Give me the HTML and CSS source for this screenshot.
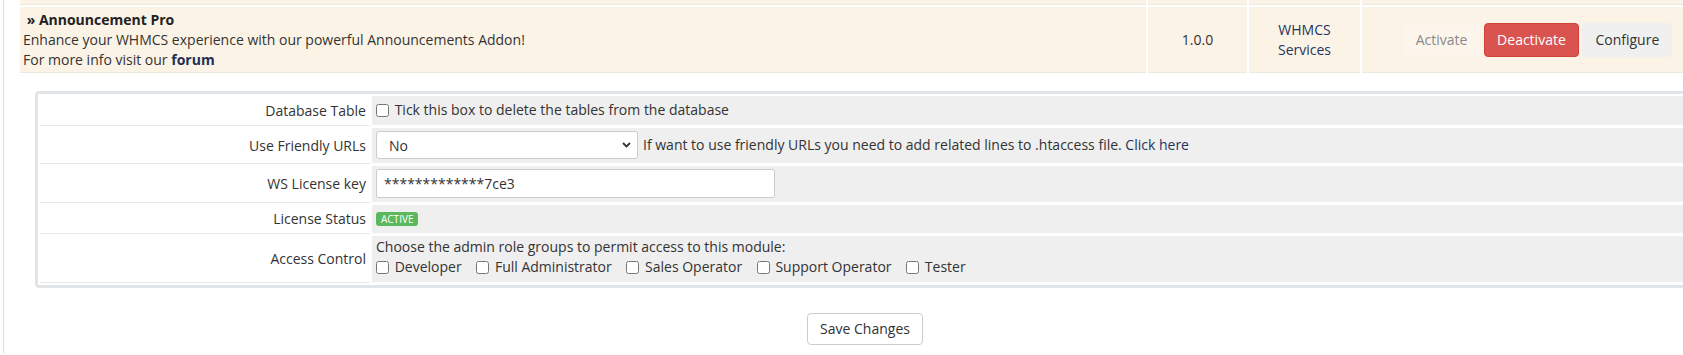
FILE: index.html
```html
<!DOCTYPE html>
<html lang="en">
<head>
    <meta charset="UTF-8">
    <title>Addon Modules</title>
    <link rel="stylesheet" href="styles.css">
</head>
<body>
    <div class="content">
        <table class="addons">
            <tr class="prev-row">
                <td class="col-info"></td>
                <td class="col-version"></td>
                <td class="col-author"></td>
                <td class="col-actions"></td>
            </tr>
            <tr class="addon-row">
                <td class="col-info">
                    <div class="addon-title">&nbsp;&raquo; Announcement Pro</div>
                    <div>Enhance your WHMCS experience with our powerful Announcements Addon!</div>
                    <div>For more info visit our <a href="#" class="forum-link">forum</a></div>
                </td>
                <td class="col-version">1.0.0</td>
                <td class="col-author"><a href="#" class="author-link">WHMCS<br>Services</a></td>
                <td class="col-actions">
                    <button class="btn btn-activate" disabled>Activate</button>
                    <button class="btn btn-deactivate">Deactivate</button>
                    <button class="btn btn-configure">Configure</button>
                </td>
            </tr>
            <tr class="config-row">
                <td colspan="4">
                    <div class="config-box">
                        <div class="field-label">Database Table</div>
                        <div class="field-area field-first">
                            <label class="check"><input type="checkbox"> Tick this box to delete the tables from the database</label>
                        </div>

                        <div class="field-label">Use Friendly URLs</div>
                        <div class="field-area field-input">
                            <span class="select-wrap">
                                <select class="select">
                                    <option>No</option>
                                    <option>Yes</option>
                                </select>
                                <svg class="chevron" width="9" height="6" viewBox="0 0 9 6"><path d="M1 1l3.5 3.5L8 1" fill="none" stroke="#333" stroke-width="1.8"/></svg>
                            </span>
                            <span class="help-text">If want to use friendly URLs you need to add related lines to .htaccess file. <a href="#" class="help-link">Click here</a></span>
                        </div>

                        <div class="field-label">WS License key</div>
                        <div class="field-area field-input">
                            <input type="text" class="text-input" value="*************7ce3">
                        </div>

                        <div class="field-label">License Status</div>
                        <div class="field-area field-status">
                            <span class="badge-active">ACTIVE</span>
                        </div>

                        <div class="field-label">Access Control</div>
                        <div class="field-area field-block">
                            <div>Choose the admin role groups to permit access to this module:</div>
                            <div class="roles">
                                <label class="check"><input type="checkbox"> Developer</label>
                                <label class="check"><input type="checkbox"> Full Administrator</label>
                                <label class="check"><input type="checkbox"> Sales Operator</label>
                                <label class="check"><input type="checkbox"> Support Operator</label>
                                <label class="check"><input type="checkbox"> Tester</label>
                            </div>
                        </div>
                    </div>
                    <div class="form-actions">
                        <button class="btn btn-save">Save Changes</button>
                    </div>
                </td>
            </tr>
        </table>
    </div>
</body>
</html>
```

FILE: styles.css
```css
* {
    box-sizing: border-box;
}

body {
    margin: 0;
    font-family: "Open Sans", Arial, sans-serif;
    font-size: 14px;
    line-height: 20px;
    color: #333;
    background: #fff;
    overflow: hidden;
}

a {
    text-decoration: none;
}

.content {
    width: 1710px;
    min-height: 355px;
    margin-left: 3px;
    border-left: 1px solid #dddddd;
    padding-left: 14px;
}

.addons {
    width: 1694px;
    border-spacing: 2px;
    margin-top: -2px;
    table-layout: fixed;
}

.addons td {
    padding: 0;
}

.col-version {
    width: 99px;
}

.col-author {
    width: 111px;
}

.col-actions {
    width: 348px;
}

.prev-row td {
    height: 5px;
    background: #fcf3e7;
    border-bottom: 1px solid #efe8de;
}

.addon-row td {
    background: #fcf3e7;
    border-bottom: 1px solid #efe8de;
    padding: 3px 3px 2px;
    vertical-align: middle;
}

.addon-title {
    font-weight: bold;
    color: #222;
}

.forum-link {
    font-weight: bold;
    color: #1f2f55;
}

.addon-row .col-version,
.addon-row .col-author,
.addon-row .col-actions {
    text-align: center;
}

.addon-row .col-actions {
    padding-left: 6px;
}

.author-link {
    color: #1f3560;
}

.btn {
    display: inline-block;
    padding: 6px 12px;
    font-family: inherit;
    font-size: 14px;
    line-height: 20px;
    border: 1px solid transparent;
    border-radius: 4px;
    cursor: pointer;
}

.btn-activate {
    background: #fcf5eb;
    color: #8a8a8a;
    cursor: not-allowed;
}

.btn-deactivate {
    background: #d9534f;
    border-color: #d43f3a;
    color: #fff;
}

.btn-configure {
    background: #f0f0f0;
    border-color: #f0f0f0;
    color: #333;
}

.config-row td {
    padding: 16px 15px 0;
}

.config-box {
    display: grid;
    grid-template-columns: 330px 1fr;
    column-gap: 2px;
    row-gap: 2px;
    border: 3px solid #e2e5e8;
    border-radius: 4px;
    padding: 2px;
}

.field-label {
    display: flex;
    align-items: center;
    justify-content: flex-end;
    padding: 4px 4px;
    border-bottom: 1px solid #e8e8e8;
    text-align: right;
}

.field-area {
    display: flex;
    align-items: center;
    padding: 4px;
    background: #efefef;
    border-bottom: 1px solid #fff;
}

.field-first {
    padding-bottom: 5px;
}

.field-input {
    padding: 3px 4px 4px;
}

.field-status {
    padding: 3px 4px 4px;
}

.field-block {
    display: block;
    padding: 1px 4px 5px;
}

.check input {
    width: 13px;
    height: 13px;
    margin: 0 2px 0 0;
    vertical-align: -2px;
}

.select-wrap {
    position: relative;
    display: inline-block;
}

.select {
    appearance: none;
    width: 262px;
    height: 28px;
    padding: 0 12px;
    border: 1px solid #ccc;
    border-radius: 3px;
    background: #fff;
    font-family: inherit;
    font-size: 14px;
    color: #333;
}

.chevron {
    position: absolute;
    right: 7px;
    top: 11px;
}

.help-text {
    margin-left: 5px;
}

.help-link {
    color: #1f3560;
}

.text-input {
    width: 399px;
    height: 29px;
    padding: 0 7px;
    border: 1px solid #ccc;
    border-radius: 2px;
    background: #fff;
    font-family: inherit;
    font-size: 14px;
    color: #333;
}

.badge-active {
    display: inline-block;
    padding: 1px 5px;
    font-size: 10px;
    line-height: 12px;
    color: #fff;
    background: #5cb85c;
    border-radius: 3px;
}

.roles .check {
    margin-right: 11px;
}

.form-actions {
    text-align: center;
    margin-top: 25px;
}

.btn-save {
    background: #fff;
    border-color: #ccc;
    color: #333;
    padding: 5px 12px;
}
```
